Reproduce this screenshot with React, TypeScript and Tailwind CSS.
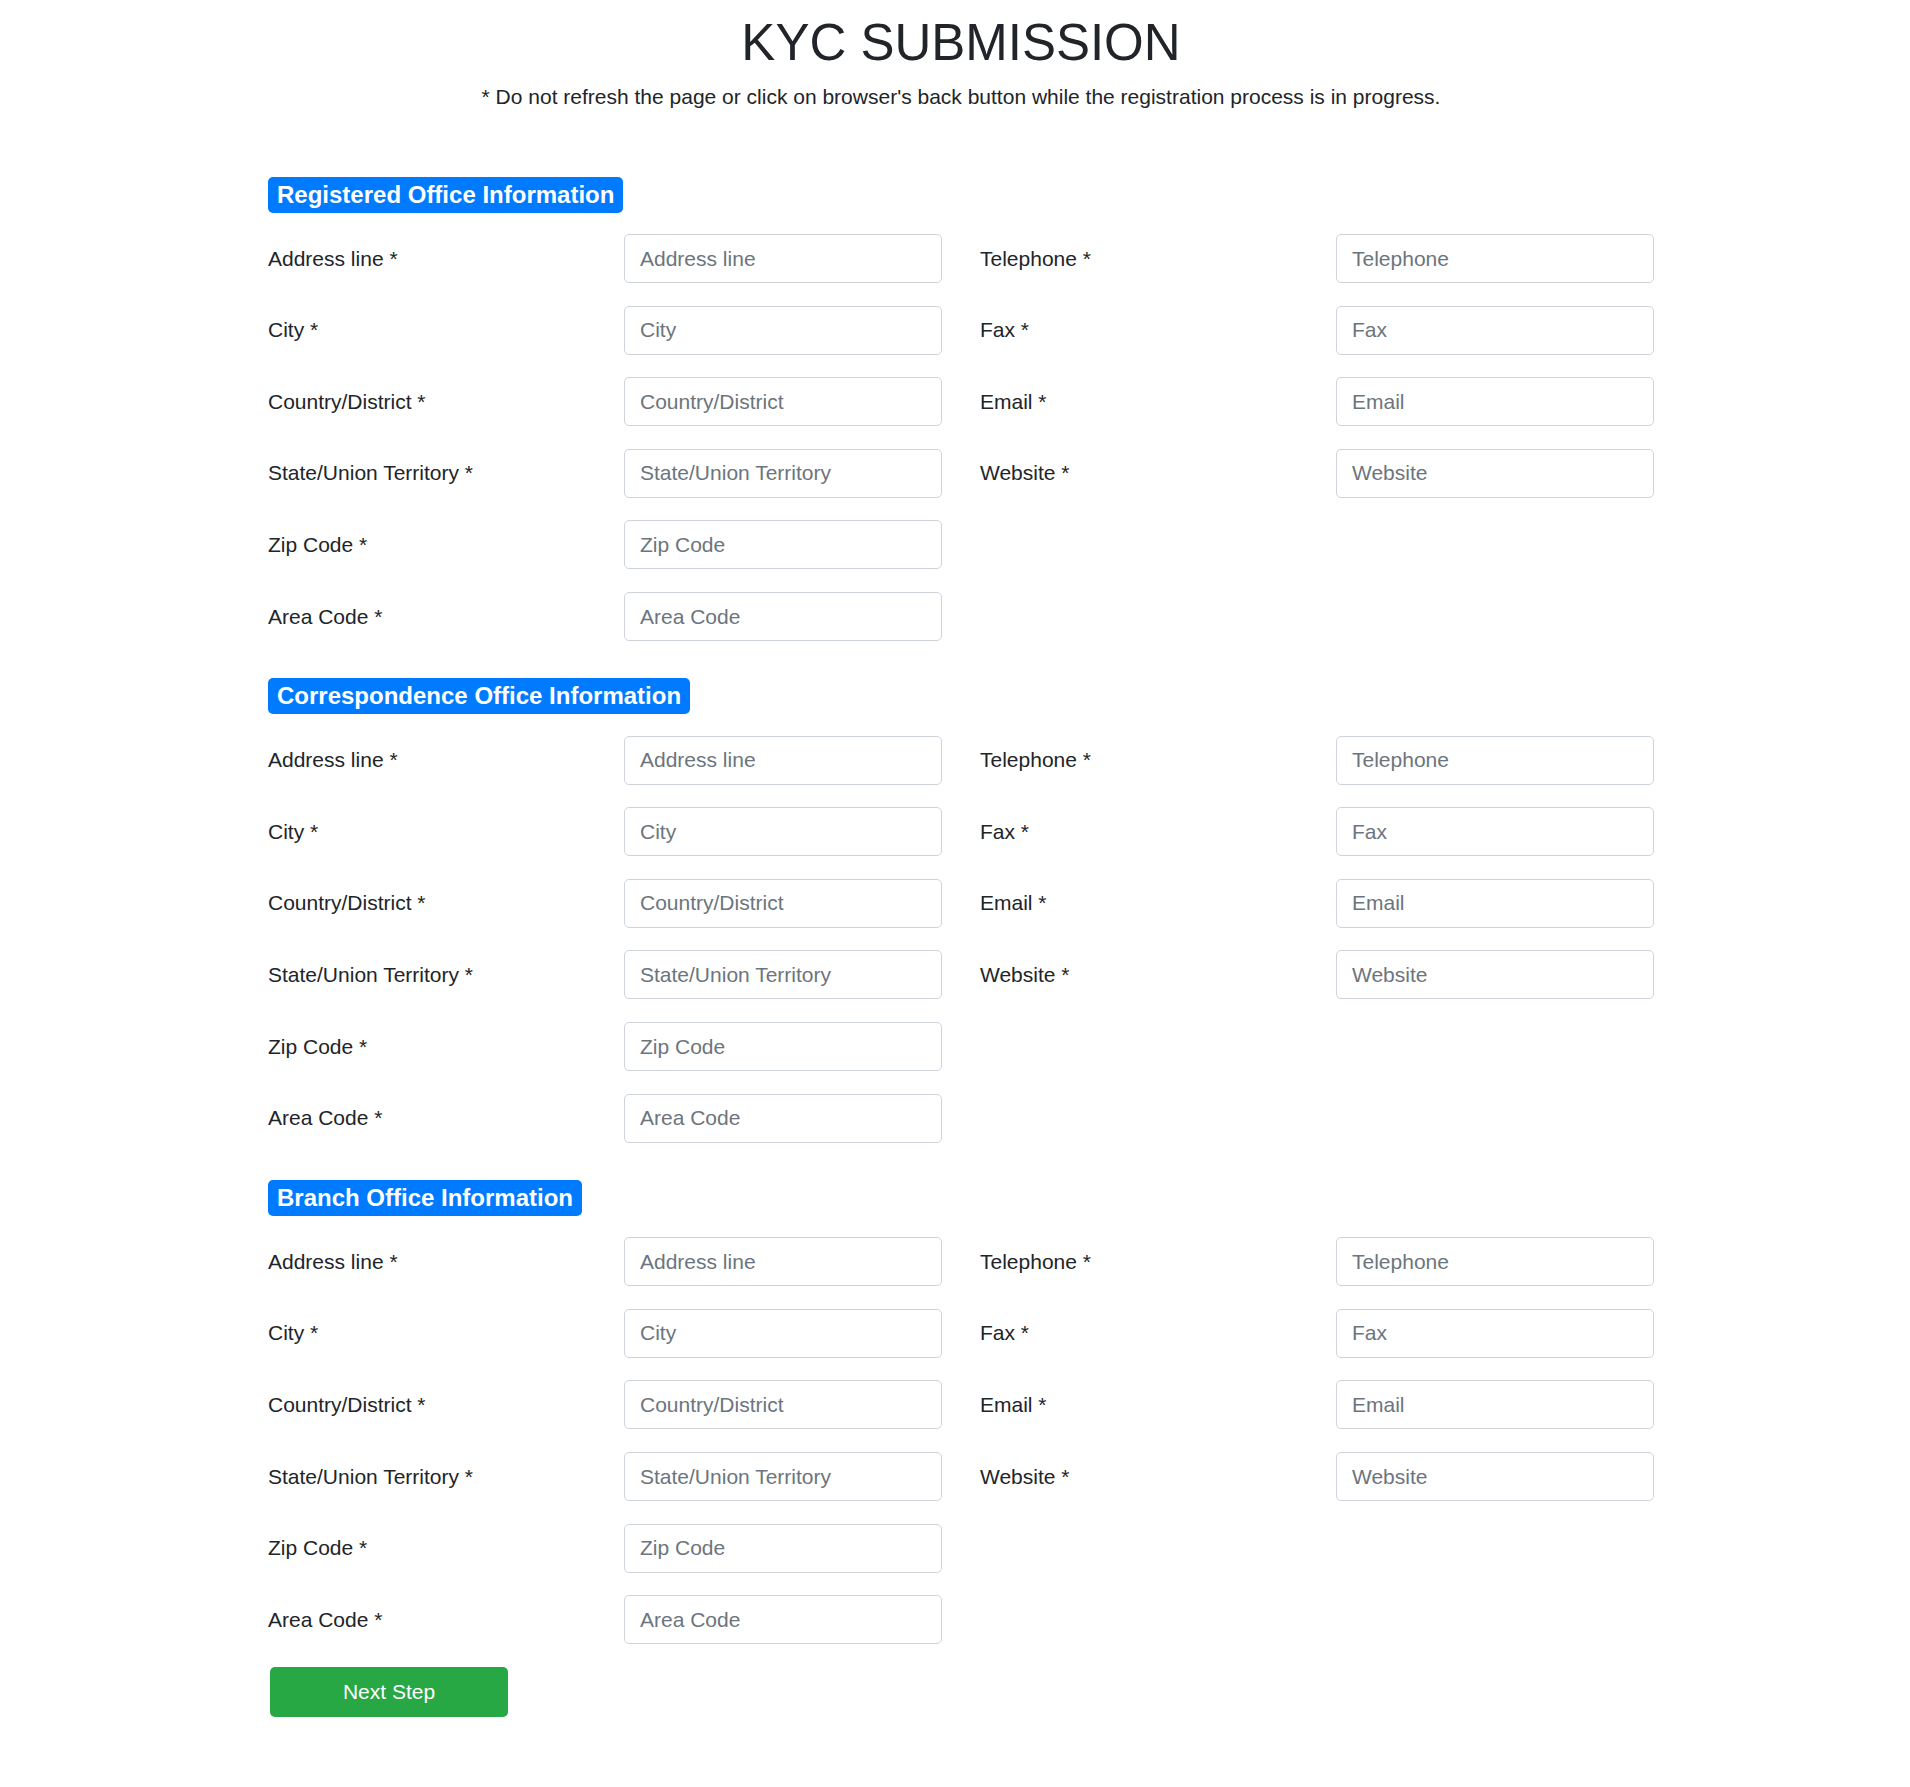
import React from 'react';

type Field = { label: string; placeholder: string };

// each row: left field, optional right field
const rows: [Field, Field | null][] = [
  [{ label: 'Address line *', placeholder: 'Address line' }, { label: 'Telephone *', placeholder: 'Telephone' }],
  [{ label: 'City *', placeholder: 'City' }, { label: 'Fax *', placeholder: 'Fax' }],
  [{ label: 'Country/District *', placeholder: 'Country/District' }, { label: 'Email *', placeholder: 'Email' }],
  [{ label: 'State/Union Territory *', placeholder: 'State/Union Territory' }, { label: 'Website *', placeholder: 'Website' }],
  [{ label: 'Zip Code *', placeholder: 'Zip Code' }, null],
  [{ label: 'Area Code *', placeholder: 'Area Code' }, null],
];

const sections = [
  'Registered Office Information',
  'Correspondence Office Information',
  'Branch Office Information',
];

function FieldPair({ field }: { field: Field }) {
  return (
    <>
      <label className="flex h-[49px] items-center text-[21px] leading-[30px] text-[#212529]">
        {field.label}
      </label>
      <input
        type="text"
        placeholder={field.placeholder}
        className="h-[49px] w-full rounded-[5px] border border-[#ced4da] bg-white px-[15px] text-[21px] text-[#495057] outline-none placeholder:text-[#6c757d]"
      />
    </>
  );
}

function OfficeSection({ title }: { title: string }) {
  return (
    <div className="mb-[37px]">
      <span className="inline-block rounded-[5px] bg-[#007bff] px-[9px] py-[6px] text-[24px] font-bold leading-[24px] text-white">
        {title}
      </span>
      <div className="mt-[21.6px] grid grid-cols-[repeat(4,318px)] gap-x-[38px] gap-y-[22.6px]">
        {rows.map(([left, right], i) => (
          <React.Fragment key={i}>
            <FieldPair field={left} />
            {right ? <FieldPair field={right} /> : <div className="col-span-2" />}
          </React.Fragment>
        ))}
      </div>
    </div>
  );
}

export default function App() {
  return (
    <div className="min-h-screen bg-white pl-[12px] font-['Liberation_Sans',Arial,sans-serif] text-[#212529]">
      <div className="mx-auto w-[1386px] pb-[71px]">
        <h1 className="pt-[12px] text-center text-[51px] font-normal leading-[61px]">KYC SUBMISSION</h1>
        <p className="mt-[8.5px] text-center text-[21px] leading-[30px]">
          * Do not refresh the page or click on browser's back button while the registration process is in progress.
        </p>

        <div className="mt-[65px]">
          {sections.map((s) => (
            <OfficeSection key={s} title={s} />
          ))}
        </div>

        <button
          type="button"
          className="-mt-[14.3px] ml-[2px] h-[50px] w-[238px] rounded-[5px] bg-[#28a745] text-[21px] text-white"
        >
          Next Step
        </button>
      </div>
    </div>
  );
}
